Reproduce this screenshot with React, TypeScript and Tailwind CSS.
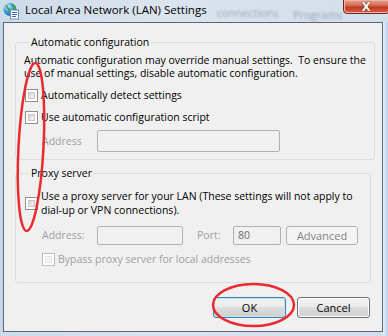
import React from "react";

const font = { fontFamily: '"Open Sans", "Noto Sans", sans-serif' };

function CheckBox({ disabled }: { disabled?: boolean }) {
  return (
    <span
      className={
        "inline-block w-[13px] h-[13px] shrink-0 border p-[2px] bg-white " +
        (disabled ? "border-[#bcbcbc]" : "border-[#8e8f8f]")
      }
    >
      <span
        className={
          "block w-full h-full border " +
          (disabled
            ? "border-[#e3e3e3] bg-gradient-to-br from-[#f0f0f0] to-[#fafafa]"
            : "border-[#c6c6c6] bg-gradient-to-br from-[#d4d4d4] to-[#f6f6f6]")
        }
      />
    </span>
  );
}

function WinButton({ label, primary, disabled, w }: { label: string; primary?: boolean; disabled?: boolean; w: string }) {
  const base = "flex items-center justify-center rounded-[3px] border text-[11px] ";
  if (disabled) {
    return (
      <div className={base + w + " border-[#adb2b5] bg-[#f4f4f4] text-[#838383]"}>{label}</div>
    );
  }
  return (
    <div
      className={
        base +
        w +
        (primary
          ? " border-[#3c7fb1] shadow-[inset_0_0_0_1px_#bfe6f8]"
          : " border-[#707070] shadow-[inset_0_0_0_1px_#fcfcfc]") +
        " bg-[linear-gradient(#f2f2f2_0%,#ebebeb_49%,#dddddd_50%,#cfcfcf_100%)] text-black"
      }
    >
      {label}
    </div>
  );
}

function AppIcon() {
  return (
    <svg width="18" height="18" viewBox="0 0 18 18">
      <defs>
        <radialGradient id="g" cx="0.35" cy="0.3" r="0.8">
          <stop offset="0" stopColor="#bfe9ff" />
          <stop offset="0.5" stopColor="#3c9be0" />
          <stop offset="1" stopColor="#1657a8" />
        </radialGradient>
      </defs>
      <circle cx="8" cy="7.5" r="6.5" fill="url(#g)" />
      <path d="M4 3.5c1.5 1 1 2.5 2.5 3s1 2-0.5 3M9.5 2c1 1.5 3 1 3.5 3s-1.5 2.5-1 4" stroke="#3fa43a" strokeWidth="1.6" fill="none" />
      <rect x="8.5" y="8" width="8" height="9" fill="#fff" stroke="#6d8fb8" strokeWidth="1" />
      <path d="M10 10.5h5M10 12.5h5M10 14.5h4" stroke="#3d6fb0" strokeWidth="1" />
    </svg>
  );
}

export default function App() {
  return (
    <div
      className="relative w-[388px] h-[336px] overflow-hidden bg-[linear-gradient(90deg,#ccdbe9,#dbe4ee_40%,#d2deea)] text-black"
      style={font}
    >
      {/* title bar */}
      <div className="relative h-[22px] flex items-start whitespace-nowrap">
        <div className="ml-[2px] mt-[2px] shrink-0">
          <AppIcon />
        </div>
        <span className="ml-[5px] mt-[2px] shrink-0 text-[11.5px] leading-[16px] text-black">
          Local Area Network (LAN) Settings
        </span>
        <span className="ml-[10px] mt-[5px] shrink-0 text-[11px] text-[#9aa6b3] blur-[1px]">connections</span>
        <span className="ml-[14px] mt-[7px] shrink-0 text-[11px] text-[#9aa6b3] blur-[1px]">Programs</span>
        <div className="ml-auto mr-[6px] shrink-0 w-[47px] h-[15px] -mt-[1px] rounded-b-[4px] border border-[#7a2219] bg-[linear-gradient(#e9a493,#d3654f_45%,#c2391f_55%,#d5604a)] flex items-center justify-center shadow-[inset_0_0_0_1px_#f0b7a8]">
          <span className="text-white font-bold text-[12px] leading-none [text-shadow:0_0_1px_#3a0e08,0_0_1px_#3a0e08]" style={{ fontFamily: '"DejaVu Sans", sans-serif' }}>
            X
          </span>
        </div>
      </div>

      <div className="flex h-[314px]">
        <div className="w-[3px] bg-[#c6d8ea]" />
        {/* client area */}
        <div className="w-[380px] h-[310px] border border-[#5b6776] bg-[#f0f0f0] text-[10.5px] leading-[13px]">
          <fieldset className="ml-[11px] mt-[12px] w-[356px] rounded-[3px] border border-[#d5dfe5] px-[8px] pb-[7px]">
            <legend className="ml-[5px] px-[2px] leading-[14px]">Automatic configuration</legend>
            <p className="mt-[5px] whitespace-nowrap">
              Automatic configuration may override manual settings.&nbsp; To ensure the
              <br />
              use of manual settings, disable automatic configuration.
            </p>
            <div className="mt-[9px] h-[13px] flex items-center pl-[1px]">
              <CheckBox />
              <span className="ml-[3px]">Automatically detect settings</span>
            </div>
            <div className="mt-[9px] h-[13px] flex items-center pl-[1px]">
              <CheckBox />
              <span className="ml-[3px]">Use automatic configuration script</span>
            </div>
            <div className="mt-[6px] flex items-center">
              <span className="ml-[18px] w-[55px] text-[#a0a0a0]">Address</span>
              <div className="w-[183px] h-[22px] border border-[#adb2b5] rounded-[2px]" />
            </div>
          </fieldset>

          <fieldset className="ml-[11px] mt-[6px] w-[356px] rounded-[3px] border border-[#d5dfe5] px-[8px] pb-[16px]">
            <legend className="ml-[5px] px-[2px] leading-[14px]">Proxy server</legend>
            <div className="mt-[9px] flex items-center pl-[1px]">
              <CheckBox />
              <span className="ml-[3px] leading-[14px]">
                Use a proxy server for your LAN (These settings will not apply to
                <br />
                dial-up or VPN connections).
              </span>
            </div>
            <div className="mt-[9px] flex items-center">
              <span className="ml-[18px] w-[55px] text-[#a0a0a0]">Address:</span>
              <div className="w-[86px] h-[19px] border border-[#adb2b5] rounded-[2px]" />
              <span className="ml-[14px] w-[36px] text-[#a0a0a0]">Port:</span>
              <div className="w-[48px] h-[19px] border border-[#adb2b5] rounded-[2px] px-[4px] leading-[17px] text-[#6d6d6d]">80</div>
              <WinButton label="Advanced" disabled w="ml-[5px] w-[72px] h-[19px]" />
            </div>
            <div className="mt-[8px] h-[13px] flex items-center pl-[18px]">
              <CheckBox disabled />
              <span className="ml-[3px] text-[#a0a0a0]">Bypass proxy server for local addresses</span>
            </div>
          </fieldset>

          <div className="mt-[14px] mr-[12px] flex justify-end gap-[11px]">
            <WinButton label="OK" primary w="w-[73px] h-[21px]" />
            <WinButton label="Cancel" w="w-[73px] h-[21px]" />
          </div>
        </div>
        <div className="w-[5px] bg-[linear-gradient(90deg,#e6eef7,#b7cfeb)]" />
      </div>

      {/* red annotation marks */}
      <svg className="absolute left-0 top-0 pointer-events-none" width="388" height="336">
        <ellipse cx="31" cy="147" rx="12.5" ry="84" transform="rotate(3 31 147)" fill="none" stroke="#ea2a2f" strokeWidth="2.5" />
        <ellipse cx="253.5" cy="305" rx="40.5" ry="21" fill="none" stroke="#ea2a2f" strokeWidth="2.5" />
      </svg>
    </div>
  );
}
